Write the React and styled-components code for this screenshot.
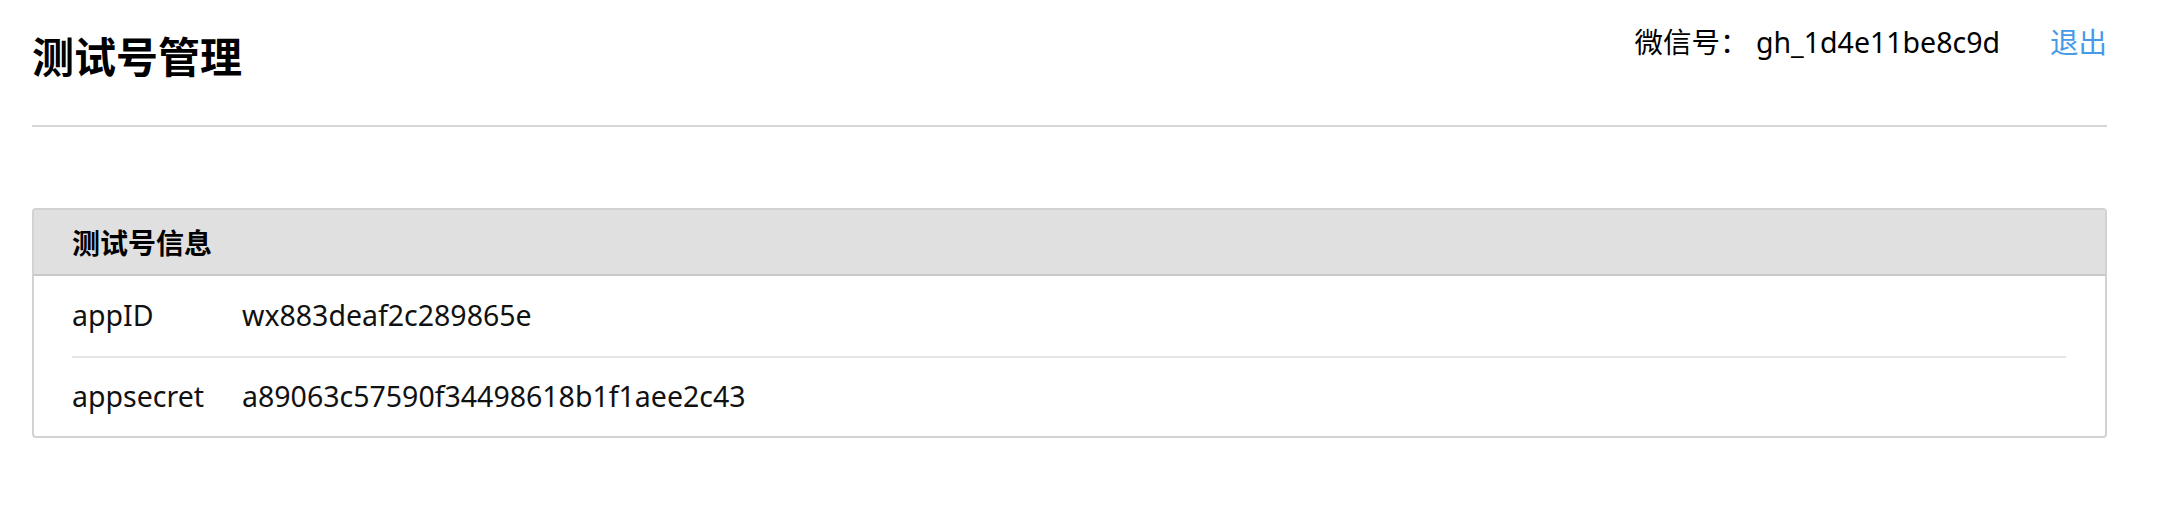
import styled, { createGlobalStyle } from "styled-components";

const GlobalStyle = createGlobalStyle`
  html, body {
    margin: 0;
    padding: 0;
    background: #fff;
  }
  body {
    font-family: "Noto Sans", "Noto Sans CJK SC", sans-serif;
    color: #000;
  }
`;

const Page = styled.div`
  padding: 0 61px 0 32px;
`;

const TopBar = styled.header`
  display: flex;
  justify-content: space-between;
  align-items: flex-start;
  height: 125px;
  border-bottom: 2px solid #d6d6d6;
  h1 {
    margin: 0;
    padding-top: 27px;
    font-size: 42px;
    line-height: 56px;
    font-weight: 700;
    font-family: "Noto Sans CJK SC", sans-serif;
  }
`;

const Account = styled.div`
  display: flex;
  align-items: center;
  padding-top: 22px;
  font-size: 28.5px;
  line-height: 40px;
  .name {
    margin-right: 50px;
  }
  a {
    color: #459ae9;
    text-decoration: none;
    cursor: pointer;
  }
`;

const Panel = styled.section`
  margin-top: 81px;
  border: 2px solid #d2d2d2;
  border-radius: 4px;
  overflow: hidden;
  .head {
    height: 64px;
    display: flex;
    align-items: center;
    padding-left: 38px;
    background-color: #e0e0e0;
    border-bottom: 2px solid #c8c8c8;
    font-family: "Noto Sans CJK SC", sans-serif;
    font-size: 28px;
    font-weight: 700;
  }
  .body {
    padding: 0 39px 0 38px;
  }
`;

const Row = styled.div`
  display: flex;
  align-items: center;
  box-sizing: border-box;
  height: ${(props) => props.height}px;
  padding-bottom: 3px;
  border-top: ${(props) => (props.first ? "none" : "2px solid #e6e6e6")};
  font-size: 28.5px;
  color: #111;
  .label {
    width: 170px;
  }
`;

const info = [
  { label: "appID", value: "wx883deaf2c289865e", height: 80 },
  { label: "appsecret", value: "a89063c57590f34498618b1f1aee2c43", height: 80 },
];

const App = () => {
  return (
    <>
      <GlobalStyle />
      <Page>
        <TopBar>
          <h1>测试号管理</h1>
          <Account>
            <span className="name">微信号： gh_1d4e11be8c9d</span>
            <a>退出</a>
          </Account>
        </TopBar>
        <Panel>
          <div className="head">测试号信息</div>
          <div className="body">
            {info.map((item, i) => (
              <Row key={item.label} first={i === 0} height={item.height}>
                <span className="label">{item.label}</span>
                <span>{item.value}</span>
              </Row>
            ))}
          </div>
        </Panel>
      </Page>
    </>
  );
};

export default App;
